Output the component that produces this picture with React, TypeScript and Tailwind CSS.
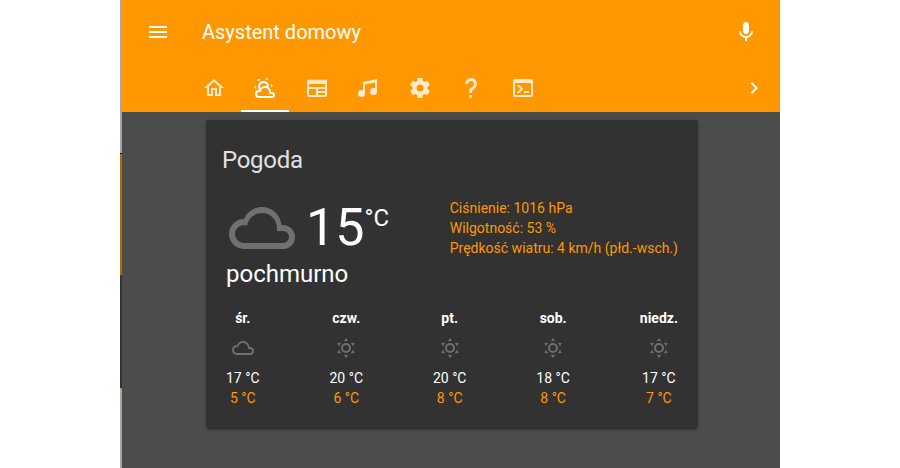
import React from "react";

const icons = {
  menu: "M3,6H21V8H3V6M3,11H21V13H3V11M3,16H21V18H3V16Z",
  mic: "M12 14c1.66 0 2.99-1.34 2.99-3L15 5c0-1.66-1.34-3-3-3S9 3.34 9 5v6c0 1.66 1.34 3 3 3zm5.3-3c0 3-2.54 5.1-5.3 5.1S6.7 14 6.7 11H5c0 3.41 2.72 6.23 6 6.72V21h2v-3.28c3.28-.48 6-3.3 6-6.72h-1.7z",
  chevron: "M8.59,16.58L13.17,12L8.59,7.41L10,6L16,12L10,18L8.59,16.58Z",
  home: "M12 5.69L17 10.19V18H15V12H9V18H7V10.19L12 5.69M12 3L2 12H5V20H11V14H13V20H19V12H22",
  partlyCloudy:
    "M12.74,5.47C15.1,6.5 16.35,9.03 15.92,11.46C17.19,12.56 18,14.19 18,16V16.17C18.31,16.06 18.65,16 19,16A3,3 0 0,1 22,19A3,3 0 0,1 19,22H6A4,4 0 0,1 2,18A4,4 0 0,1 6,14H6.27C5,12.45 4.6,10.24 5.5,8.26C6.72,5.5 9.97,4.24 12.74,5.47M11.93,7.3C10.16,6.5 8.09,7.31 7.31,9.07C6.85,10.09 6.93,11.22 7.41,12.13C8.5,10.83 10.16,10 12,10C12.7,10 13.38,10.12 14,10.34C13.94,9.06 13.18,7.86 11.93,7.3M13.55,3.64C13,3.4 12.45,3.23 11.88,3.12L14.37,1.82L15.27,4.71C14.76,4.29 14.19,3.93 13.55,3.64M6.09,4.44C5.6,4.79 5.17,5.19 4.8,5.63L4.91,2.82L7.87,3.5C7.25,3.71 6.65,4.03 6.09,4.44M18,9.71C17.91,9.12 17.78,8.55 17.59,8L19.97,9.5L17.92,11.73C18.03,11.08 18.05,10.4 18,9.71M3.04,11.3C3.11,11.9 3.24,12.47 3.43,13L1.06,11.5L3.1,9.28C3,9.93 2.97,10.61 3.04,11.3M19,18H16V16A4,4 0 0,0 12,12A4,4 0 0,0 8,16H6A2,2 0 0,0 4,18A2,2 0 0,0 6,20H19A1,1 0 0,0 20,19A1,1 0 0,0 19,18Z",
  newspaper:
    "M20,11H4V8H20M20,15H13V13H20M20,19H13V17H20M11,19H4V13H11M20.33,4.67L18.67,3L17,4.67L15.33,3L13.67,4.67L12,3L10.33,4.67L8.67,3L7,4.67L5.33,3L3.67,4.67L2,3V19A2,2 0 0,0 4,21H20A2,2 0 0,0 22,19V3L20.33,4.67Z",
  music:
    "M21,3V15.5A3.5,3.5 0 0,1 17.5,19A3.5,3.5 0 0,1 14,15.5A3.5,3.5 0 0,1 17.5,12C18.04,12 18.55,12.12 19,12.34V6.47L9,8.6V17.5A3.5,3.5 0 0,1 5.5,21A3.5,3.5 0 0,1 2,17.5A3.5,3.5 0 0,1 5.5,14C6.04,14 6.55,14.12 7,14.34V6L21,3Z",
  settings:
    "M12,15.5A3.5,3.5 0 0,1 8.5,12A3.5,3.5 0 0,1 12,8.5A3.5,3.5 0 0,1 15.5,12A3.5,3.5 0 0,1 12,15.5M19.43,12.97C19.47,12.65 19.5,12.33 19.5,12C19.5,11.67 19.47,11.34 19.43,11L21.54,9.37C21.73,9.22 21.78,8.95 21.66,8.73L19.66,5.27C19.54,5.05 19.27,4.96 19.05,5.05L16.56,6.05C16.04,5.66 15.5,5.32 14.87,5.07L14.5,2.42C14.46,2.18 14.25,2 14,2H10C9.75,2 9.54,2.18 9.5,2.42L9.13,5.07C8.5,5.32 7.96,5.66 7.44,6.05L4.95,5.05C4.73,4.96 4.46,5.05 4.34,5.27L2.34,8.73C2.21,8.95 2.27,9.22 2.46,9.37L4.57,11C4.53,11.34 4.5,11.67 4.5,12C4.5,12.33 4.53,12.65 4.57,12.97L2.46,14.63C2.27,14.78 2.21,15.05 2.34,15.27L4.34,18.73C4.46,18.95 4.73,19.03 4.95,18.95L7.44,17.94C7.96,18.34 8.5,18.68 9.13,18.93L9.5,21.58C9.54,21.82 9.75,22 10,22H14C14.25,22 14.46,21.82 14.5,21.58L14.87,18.93C15.5,18.67 16.04,18.34 16.56,17.94L19.05,18.95C19.27,19.03 19.54,18.95 19.66,18.73L21.66,15.27C21.78,15.05 21.73,14.78 21.54,14.63L19.43,12.97Z",
  help: "M10,19H13V22H10V19M12,2C17.35,2.22 19.68,7.62 16.5,11.67C15.67,12.67 14.33,13.33 13.67,14.17C13,15 13,16 13,17H10C10,15.33 10,13.92 10.67,12.92C11.33,11.92 12.67,11.33 13.5,10.67C15.92,8.43 15.32,5.26 12,5A3,3 0 0,0 9,8H6A6,6 0 0,1 12,2Z",
  console:
    "M20,19V7H4V19H20M20,3A2,2 0 0,1 22,5V19A2,2 0 0,1 20,21H4A2,2 0 0,1 2,19V5C2,3.89 2.9,3 4,3H20M13,17V15H18V17H13M9.58,13L5.57,9H8.4L11.7,12.3C12.09,12.69 12.09,13.33 11.7,13.72L8.42,17H5.59L9.58,13Z",
  cloudy:
    "M6,19A5,5 0 0,1 1,14A5,5 0 0,1 6,9C7,6.65 9.3,5 12,5C15.43,5 18.24,7.66 18.5,11.03L19,11A4,4 0 0,1 23,15A4,4 0 0,1 19,19H6M19,13H17V12A5,5 0 0,0 12,7C9.5,7 7.45,8.82 7.06,11.19C6.73,11.07 6.37,11 6,11A3,3 0 0,0 3,14A3,3 0 0,0 6,17H19A2,2 0 0,0 21,15A2,2 0 0,0 19,13Z",
  sunny:
    "M12,7A5,5 0 0,1 17,12A5,5 0 0,1 12,17A5,5 0 0,1 7,12A5,5 0 0,1 12,7M12,9A3,3 0 0,0 9,12A3,3 0 0,0 12,15A3,3 0 0,0 15,12A3,3 0 0,0 12,9M12,2L14.39,5.42C13.65,5.15 12.84,5 12,5C11.16,5 10.35,5.15 9.61,5.42L12,2M3.34,7L7.5,6.65C6.9,7.16 6.36,7.78 5.94,8.5C5.5,9.24 5.25,10 5.11,10.79L3.34,7M3.36,17L5.12,13.23C5.26,14 5.53,14.78 5.95,15.5C6.37,16.24 6.91,16.86 7.5,17.37L3.36,17M20.65,7L18.88,10.79C18.74,10 18.47,9.23 18.05,8.5C17.63,7.78 17.1,7.15 16.5,6.64L20.65,7M20.64,17L16.5,17.36C17.09,16.85 17.62,16.22 18.04,15.5C18.46,14.77 18.73,14 18.87,13.21L20.64,17M12,22L9.59,18.56C10.33,18.83 11.14,19 12,19C12.82,19 13.63,18.83 14.37,18.56L12,22Z",
};

type IconName = keyof typeof icons;

function Icon({ name, className = "size-6" }: { name: IconName; className?: string }) {
  return (
    <svg viewBox="0 0 24 24" fill="currentColor" className={`shrink-0 ${className}`}>
      <path d={icons[name]} />
    </svg>
  );
}

const tabs: IconName[] = ["home", "partlyCloudy", "newspaper", "music", "settings", "help", "console"];

const forecast: { day: string; icon: IconName; high: number; low: number }[] = [
  { day: "śr.", icon: "cloudy", high: 17, low: 5 },
  { day: "czw.", icon: "sunny", high: 20, low: 6 },
  { day: "pt.", icon: "sunny", high: 20, low: 8 },
  { day: "sob.", icon: "sunny", high: 18, low: 8 },
  { day: "niedz.", icon: "sunny", high: 17, low: 7 },
];

function Header() {
  return (
    <header className="flex h-28 flex-col bg-[#ff9800] text-white">
      <div className="flex h-16 items-center pr-[22px] pl-6">
        <Icon name="menu" />
        <h1 className="ml-8 flex-1 text-xl leading-6 font-normal">Asystent domowy</h1>
        <Icon name="mic" />
      </div>
      <nav className="flex h-12 items-center pr-3.5 pl-[68px]">
        <div className="flex flex-1 gap-[3.43px]">
          {tabs.map((name) => (
            <button
              key={name}
              className={
                name === "partlyCloudy"
                  ? "flex h-12 w-12 items-center justify-center border-b-2 border-white pt-0.5"
                  : "flex h-12 w-12 items-center justify-center text-white/80"
              }
            >
              <Icon name={name} />
            </button>
          ))}
        </div>
        <Icon name="chevron" />
      </nav>
    </header>
  );
}

function WeatherCard() {
  return (
    <section className="mx-auto mt-2 h-[308px] w-[492px] rounded-[2px] bg-[#323232] pt-5 pr-5 pl-5 text-white shadow-[0_2px_2px_0_rgba(0,0,0,0.14),0_1px_5px_0_rgba(0,0,0,0.12),0_3px_1px_-2px_rgba(0,0,0,0.2)]">
      <h2 className="-ml-1 h-10 text-2xl leading-10 font-normal tracking-[-0.012em] text-[#e1e1e1]">Pogoda</h2>
      <div className="mt-3 flex h-[72px] justify-between">
        <div className="flex">
          <Icon name="cloudy" className="size-[72px] text-[#707070]" />
          <div className="ml-2 flex">
            <span className="text-[52px] leading-[72px]">15</span>
            <span className="mt-3 text-2xl leading-7">°C</span>
          </div>
        </div>
        <div className="mt-1.5 text-sm leading-5 text-[#ff9800]">
          <div>Ciśnienie: 1016 hPa</div>
          <div>Wilgotność: 53 %</div>
          <div>Prędkość wiatru: 4 km/h (płd.-wsch.)</div>
        </div>
      </div>
      <div className="-mt-0.5 h-[46px] text-2xl leading-6">pochmurno</div>
      <div className="flex justify-between text-center text-sm leading-5">
        {forecast.map((f) => (
          <div key={f.day} className="flex flex-col items-center">
            <div className="font-bold">{f.day}</div>
            <div className="flex h-10 items-center text-[#707070]">
              <Icon name={f.icon} />
            </div>
            <div>{f.high} °C</div>
            <div className="text-[#ff9800]">{f.low} °C</div>
          </div>
        ))}
      </div>
    </section>
  );
}

export default function App() {
  return (
    <div className="h-[468px] w-[900px] overflow-hidden bg-white font-[Roboto,sans-serif]">
      <div className="mx-auto flex h-full w-[660px]">
        <div className="flex w-0.5 flex-col bg-[#a6a6a6]">
          <div className="mt-[153px] h-px bg-[#111]" />
          <div className="h-[121px] bg-[#b26a00]" />
          <div className="h-[113px] bg-[#333]" />
          <div className="h-px bg-[#a6a600]" />
        </div>
        <main className="flex-1 bg-[#4c4c4c]">
          <Header />
          <div className="pl-1.5 pr-1">
            <WeatherCard />
          </div>
        </main>
      </div>
    </div>
  );
}
